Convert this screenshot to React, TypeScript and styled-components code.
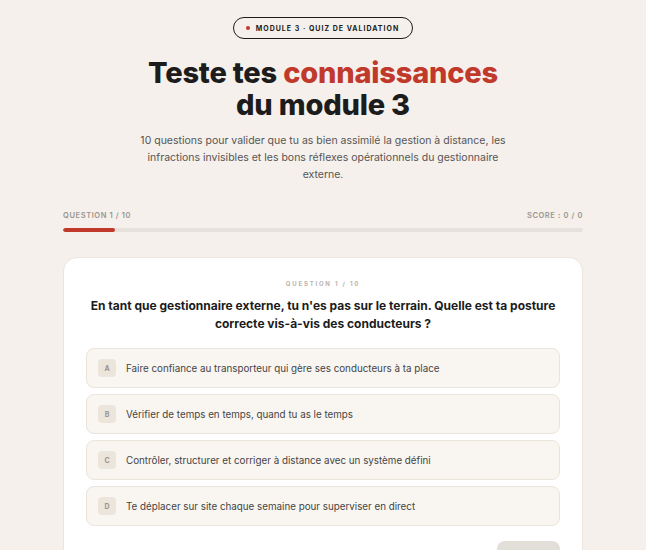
import styled, { createGlobalStyle } from "styled-components";

const GlobalStyle = createGlobalStyle`
  * { box-sizing: border-box; }
  body {
    margin: 0;
    background: #f5f0eb;
    font-family: Inter, "Noto Sans", sans-serif;
    color: #1c1c1c;
  }
`;

const options = [
  { key: "A", text: "Faire confiance au transporteur qui gère ses conducteurs à ta place" },
  { key: "B", text: "Vérifier de temps en temps, quand tu as le temps" },
  { key: "C", text: "Contrôler, structurer et corriger à distance avec un système défini" },
  { key: "D", text: "Te déplacer sur site chaque semaine pour superviser en direct" },
];

export default function App() {
  const current = 1;
  const total = 10;
  return (
    <>
      <GlobalStyle />
      <Page>
        <Badge>
          <Dot />
          Module 3 · Quiz de validation
        </Badge>
        <Title>
          Teste tes <Accent>connaissances</Accent>
          <br />
          du module 3
        </Title>
        <Lead>
          10 questions pour valider que tu as bien assimilé la gestion à distance, les
          infractions invisibles et les bons réflexes opérationnels du gestionnaire externe.
        </Lead>
        <Progress>
          <ProgressLabels>
            <span>Question {current} / {total}</span>
            <span>Score : 0 / 0</span>
          </ProgressLabels>
          <Track>
            <Fill style={{ width: `${(current / total) * 100}%` }} />
          </Track>
        </Progress>
        <Card>
          <Kicker>Question {current} / {total}</Kicker>
          <Question>
            En tant que gestionnaire externe, tu n'es pas sur le terrain. Quelle est ta posture
            correcte vis-à-vis des conducteurs ?
          </Question>
          <Options>
            {options.map((o) => (
              <Option key={o.key}>
                <Letter>{o.key}</Letter>
                {o.text}
              </Option>
            ))}
          </Options>
          <Footer>
            <NextButton disabled>Suivant</NextButton>
          </Footer>
        </Card>
      </Page>
    </>
  );
}

const Page = styled.div`
  width: 520px;
  margin: 0 auto;
  padding-top: 17px;
  display: flex;
  flex-direction: column;
  align-items: center;
`;

const Badge = styled.div`
  display: flex;
  align-items: center;
  gap: 6px;
  height: 22px;
  padding: 0 13px 0 12px;
  border: 1.5px solid #1c1c1c;
  border-radius: 999px;
  font-size: 7px;
  font-weight: 700;
  letter-spacing: 1px;
  text-transform: uppercase;
`;

const Dot = styled.span`
  width: 4px;
  height: 4px;
  border-radius: 50%;
  background: #c0392b;
`;

const Title = styled.h1`
  margin: 18px 0 0;
  font-size: 29px;
  line-height: 32px;
  font-weight: 800;
  letter-spacing: -0.2px;
  text-align: center;
`;

const Accent = styled.span`
  color: #c0392b;
`;

const Lead = styled.p`
  margin: 11px 0 0;
  width: 372px;
  font-size: 10.5px;
  line-height: 17px;
  color: #555;
  text-align: center;
`;

const Progress = styled.div`
  width: 100%;
  margin-top: 28px;
`;

const ProgressLabels = styled.div`
  display: flex;
  justify-content: space-between;
  font-size: 7.5px;
  font-weight: 600;
  letter-spacing: 0.6px;
  text-transform: uppercase;
  color: #9a958f;
`;

const Track = styled.div`
  margin-top: 8px;
  height: 4px;
  border-radius: 2px;
  background: #e6e1da;
  overflow: hidden;
`;

const Fill = styled.div`
  height: 100%;
  border-radius: 2px;
  background: #c0392b;
`;

const Card = styled.div`
  width: 100%;
  margin-top: 25px;
  padding: 22px 22px 20px;
  background: #fff;
  border: 1px solid #ebe5de;
  border-radius: 14px;
`;

const Kicker = styled.div`
  font-size: 6px;
  font-weight: 700;
  letter-spacing: 1.8px;
  text-transform: uppercase;
  color: #b9b4ae;
  text-align: center;
`;

const Question = styled.h2`
  margin: 10px 0 0;
  font-size: 12px;
  line-height: 18px;
  font-weight: 700;
  text-align: center;
`;

const Options = styled.div`
  margin-top: 15px;
  display: flex;
  flex-direction: column;
  gap: 6px;
`;

const Option = styled.div`
  display: flex;
  align-items: center;
  gap: 10px;
  height: 40px;
  padding: 0 11px;
  background: #f9f6f1;
  border: 1px solid #ebe4da;
  border-radius: 8px;
  font-size: 9.8px;
  color: #444;
`;

const Letter = styled.span`
  display: flex;
  align-items: center;
  justify-content: center;
  width: 18px;
  height: 18px;
  border-radius: 4px;
  background: #ebe5dc;
  font-size: 7px;
  font-weight: 700;
  color: #9a948d;
`;

const Footer = styled.div`
  margin-top: 15px;
  display: flex;
  justify-content: flex-end;
`;

const NextButton = styled.button`
  width: 63px;
  height: 36px;
  border: none;
  border-radius: 8px;
  background: #e2ded8;
  color: #fff;
  font-family: inherit;
  font-size: 10px;
  font-weight: 600;
`;
